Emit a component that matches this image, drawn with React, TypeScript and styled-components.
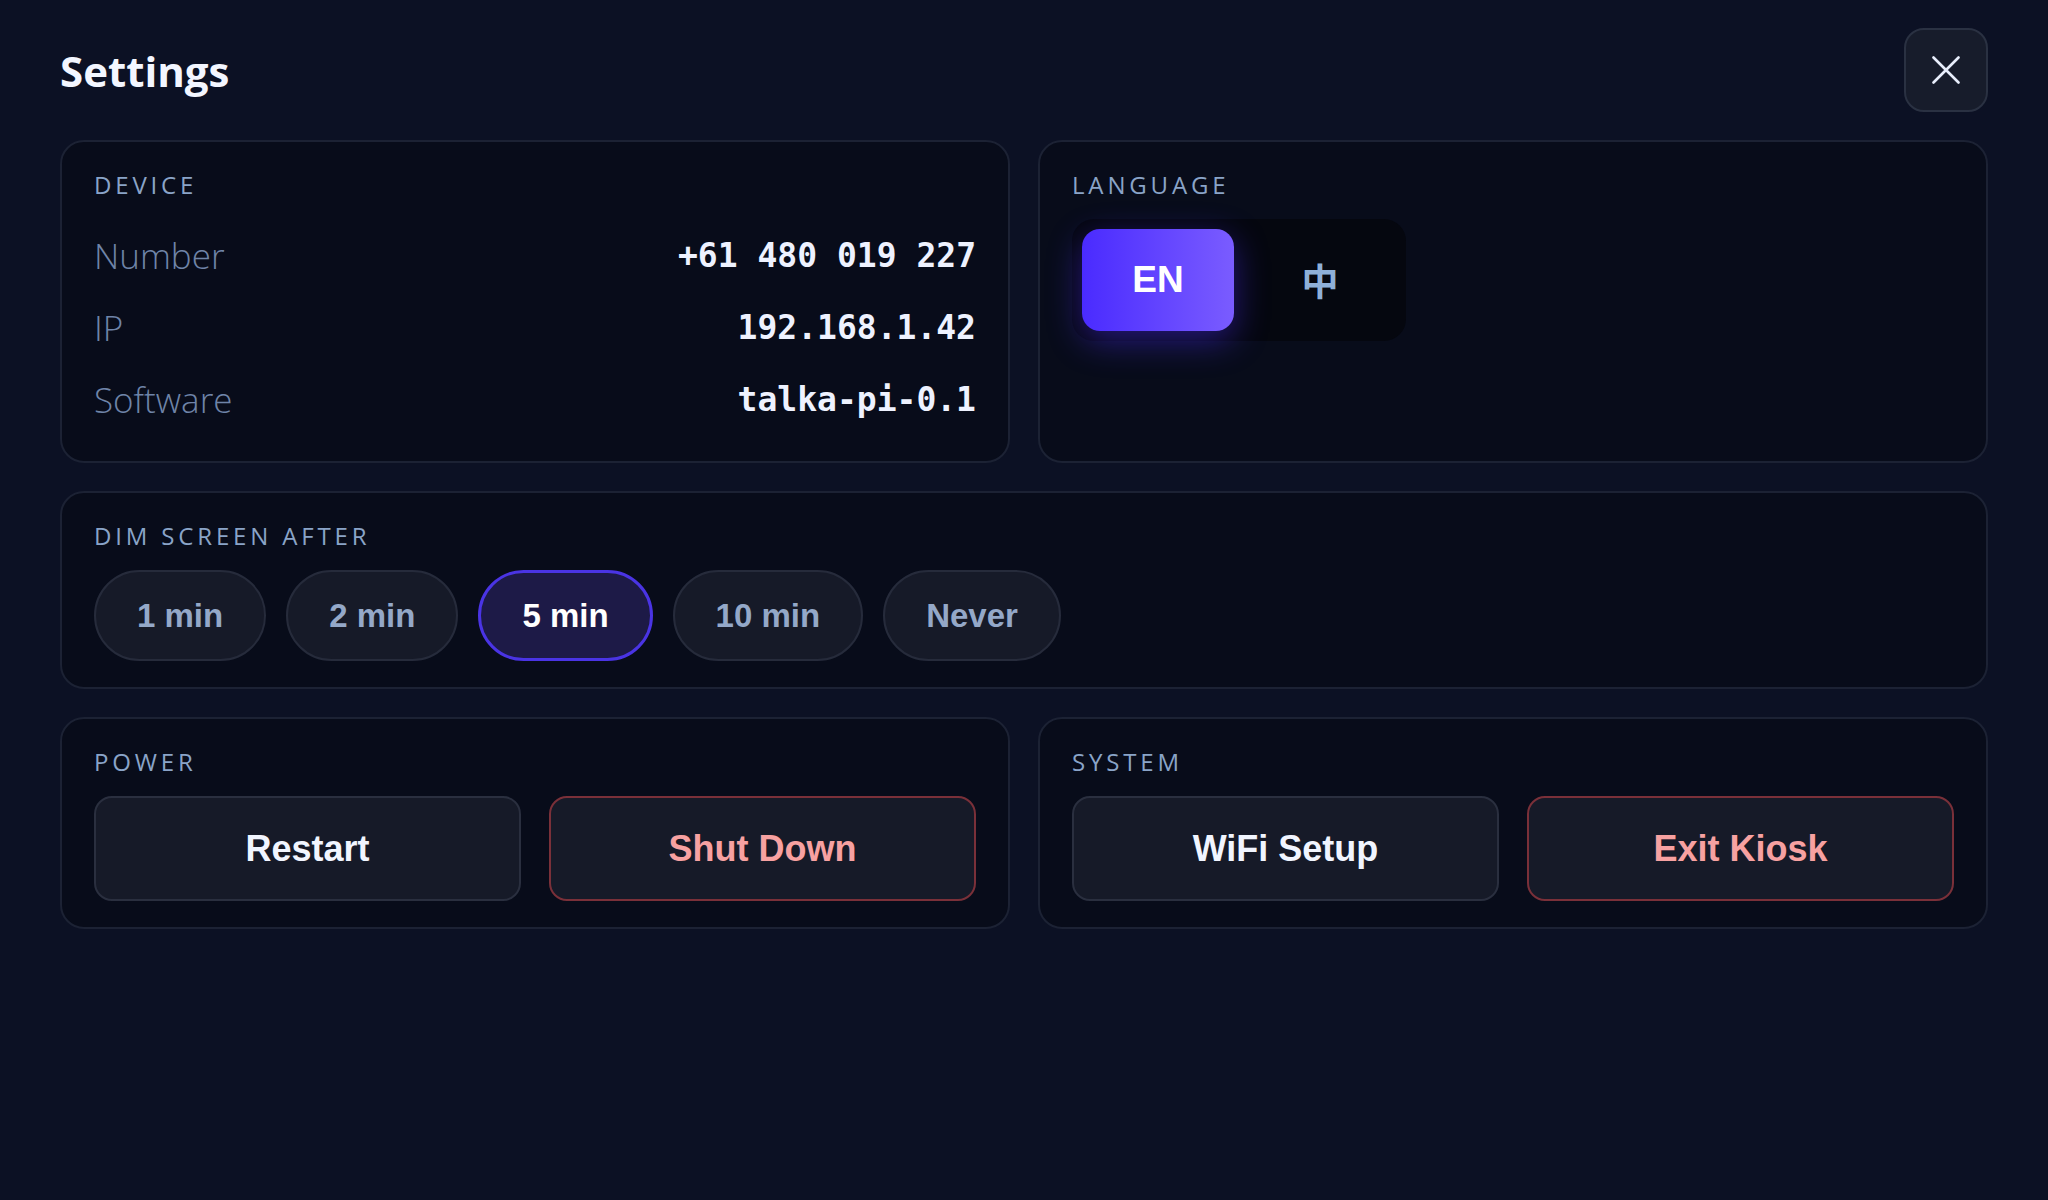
import React, { useState } from 'react';
import styled, { createGlobalStyle, css } from 'styled-components';

const GlobalStyle = createGlobalStyle`
  html, body {
    margin: 0;
    padding: 0;
    background: #0c1124;
  }
  body {
    font-family: "Open Sans", "Noto Sans", sans-serif;
    color: #eef2ff;
  }
`;

const dimOptions = ['1 min', '2 min', '5 min', '10 min', 'Never'];

const deviceInfo = [
  { label: 'Number', value: '+61 480 019 227' },
  { label: 'IP', value: '192.168.1.42' },
  { label: 'Software', value: 'talka-pi-0.1' },
];

const App: React.FC = () => {
  const [lang, setLang] = useState<'en' | 'zh'>('en');
  const [dim, setDim] = useState('5 min');

  return (
    <>
      <GlobalStyle />
      <Page>
        <Header>
          <Title>Settings</Title>
          <CloseButton aria-label="Close">
            <svg width="28" height="28" viewBox="0 0 28 28" fill="none">
              <path d="M1.5 1.5 26.5 26.5M26.5 1.5 1.5 26.5" stroke="#e8eefc" strokeWidth="2.6" strokeLinecap="round" />
            </svg>
          </CloseButton>
        </Header>

        <Grid>
          {/* Infos appareil */}
          <Card>
            <CardLabel>Device</CardLabel>
            {deviceInfo.map(row => (
              <InfoRow key={row.label}>
                <InfoLabel>{row.label}</InfoLabel>
                <InfoValue>{row.value}</InfoValue>
              </InfoRow>
            ))}
          </Card>

          {/* Langue */}
          <Card>
            <CardLabel>Language</CardLabel>
            <LangToggle>
              <LangButton $active={lang === 'en'} onClick={() => setLang('en')}>EN</LangButton>
              <LangButton $active={lang === 'zh'} $cjk onClick={() => setLang('zh')}>中</LangButton>
            </LangToggle>
          </Card>

          {/* Mise en veille */}
          <Card $wide>
            <CardLabel>Dim screen after</CardLabel>
            <PillRow>
              {dimOptions.map(opt => (
                <Pill key={opt} $active={dim === opt} onClick={() => setDim(opt)}>
                  {opt}
                </Pill>
              ))}
            </PillRow>
          </Card>

          <Card>
            <CardLabel>Power</CardLabel>
            <ActionRow>
              <ActionButton>Restart</ActionButton>
              <ActionButton $danger>Shut Down</ActionButton>
            </ActionRow>
          </Card>

          <Card>
            <CardLabel>System</CardLabel>
            <ActionRow>
              <ActionButton>WiFi Setup</ActionButton>
              <ActionButton $danger>Exit Kiosk</ActionButton>
            </ActionRow>
          </Card>
        </Grid>
      </Page>
    </>
  );
};

// === STYLED COMPONENTS ===

const Page = styled.div`
  min-height: 1200px;
  box-sizing: border-box;
  padding: 28px 60px;
  display: flex;
  flex-direction: column;
  gap: 28px;
`;

const Header = styled.div`
  display: flex;
  align-items: center;
  justify-content: space-between;
  height: 84px;
`;

const Title = styled.h1`
  margin: 0;
  font-family: "Open Sans", sans-serif;
  font-weight: 700;
  font-size: 42px;
  color: #f3f6ff;
`;

const CloseButton = styled.button`
  width: 84px;
  height: 84px;
  box-sizing: border-box;
  display: flex;
  align-items: center;
  justify-content: center;
  background: #171c2b;
  border: 2px solid #2a3142;
  border-radius: 20px;
  cursor: pointer;
  padding: 0;
`;

const Grid = styled.div`
  display: grid;
  grid-template-columns: 1fr 1fr;
  gap: 28px;
`;

const Card = styled.section<{ $wide?: boolean }>`
  box-sizing: border-box;
  background: #080c1a;
  border: 2px solid #1c2234;
  border-radius: 24px;
  padding: 26px 32px;
  display: flex;
  flex-direction: column;
  ${props => props.$wide && css`grid-column: 1 / -1;`}
`;

const CardLabel = styled.div`
  font-family: "Open Sans", sans-serif;
  font-size: 24px;
  font-weight: 400;
  letter-spacing: 0.16em;
  text-transform: uppercase;
  color: #8aa4c8;
  margin-bottom: 18px;
`;

const InfoRow = styled.div`
  display: flex;
  align-items: center;
  justify-content: space-between;
  height: 72px;
`;

const InfoLabel = styled.span`
  font-family: "Open Sans", sans-serif;
  font-weight: 300;
  font-size: 35px;
  color: #6f84a8;
`;

const InfoValue = styled.span`
  font-family: "DejaVu Sans Mono", "Liberation Mono", monospace;
  font-weight: 700;
  font-size: 33px;
  color: #eef2ff;
`;

const LangToggle = styled.div`
  align-self: flex-start;
  display: flex;
  gap: 10px;
  padding: 10px;
  background: #05070f;
  border-radius: 22px;
`;

const LangButton = styled.button<{ $active?: boolean; $cjk?: boolean }>`
  width: 152px;
  height: 102px;
  border: none;
  border-radius: 18px;
  cursor: pointer;
  font-family: ${props => props.$cjk
    ? '"Noto Sans CJK SC", "Noto Sans", sans-serif'
    : '"Liberation Sans", Arial, sans-serif'};
  font-weight: 700;
  font-size: 37px;
  background: transparent;
  color: #8fb0d8;

  ${props => props.$active && css`
    background: linear-gradient(90deg, #4a2bff 0%, #7a5cff 100%);
    color: #ffffff;
    box-shadow: 0 10px 34px rgba(76, 44, 255, 0.45);
  `}
`;

const PillRow = styled.div`
  display: flex;
  gap: 20px;
`;

const Pill = styled.button<{ $active?: boolean }>`
  height: 91px;
  padding: 0 41px;
  box-sizing: border-box;
  border-radius: 46px;
  background: #161a28;
  border: 2px solid #262b3b;
  font-family: "Liberation Sans", Arial, sans-serif;
  font-weight: 700;
  font-size: 33px;
  color: #94a8c8;
  cursor: pointer;

  ${props => props.$active && css`
    background: #1d1a47;
    border: 3px solid #4a34e4;
    color: #ffffff;
  `}
`;

const ActionRow = styled.div`
  display: grid;
  grid-template-columns: 1fr 1fr;
  gap: 28px;
`;

const ActionButton = styled.button<{ $danger?: boolean }>`
  height: 105px;
  box-sizing: border-box;
  border-radius: 18px;
  background: #161a28;
  border: 2px solid ${props => props.$danger ? '#7a3039' : '#2a2f3f'};
  color: ${props => props.$danger ? '#f7a1a1' : '#f1f5ff'};
  font-family: "Liberation Sans", Arial, sans-serif;
  font-weight: 700;
  font-size: 36px;
  cursor: pointer;
`;

export default App;
